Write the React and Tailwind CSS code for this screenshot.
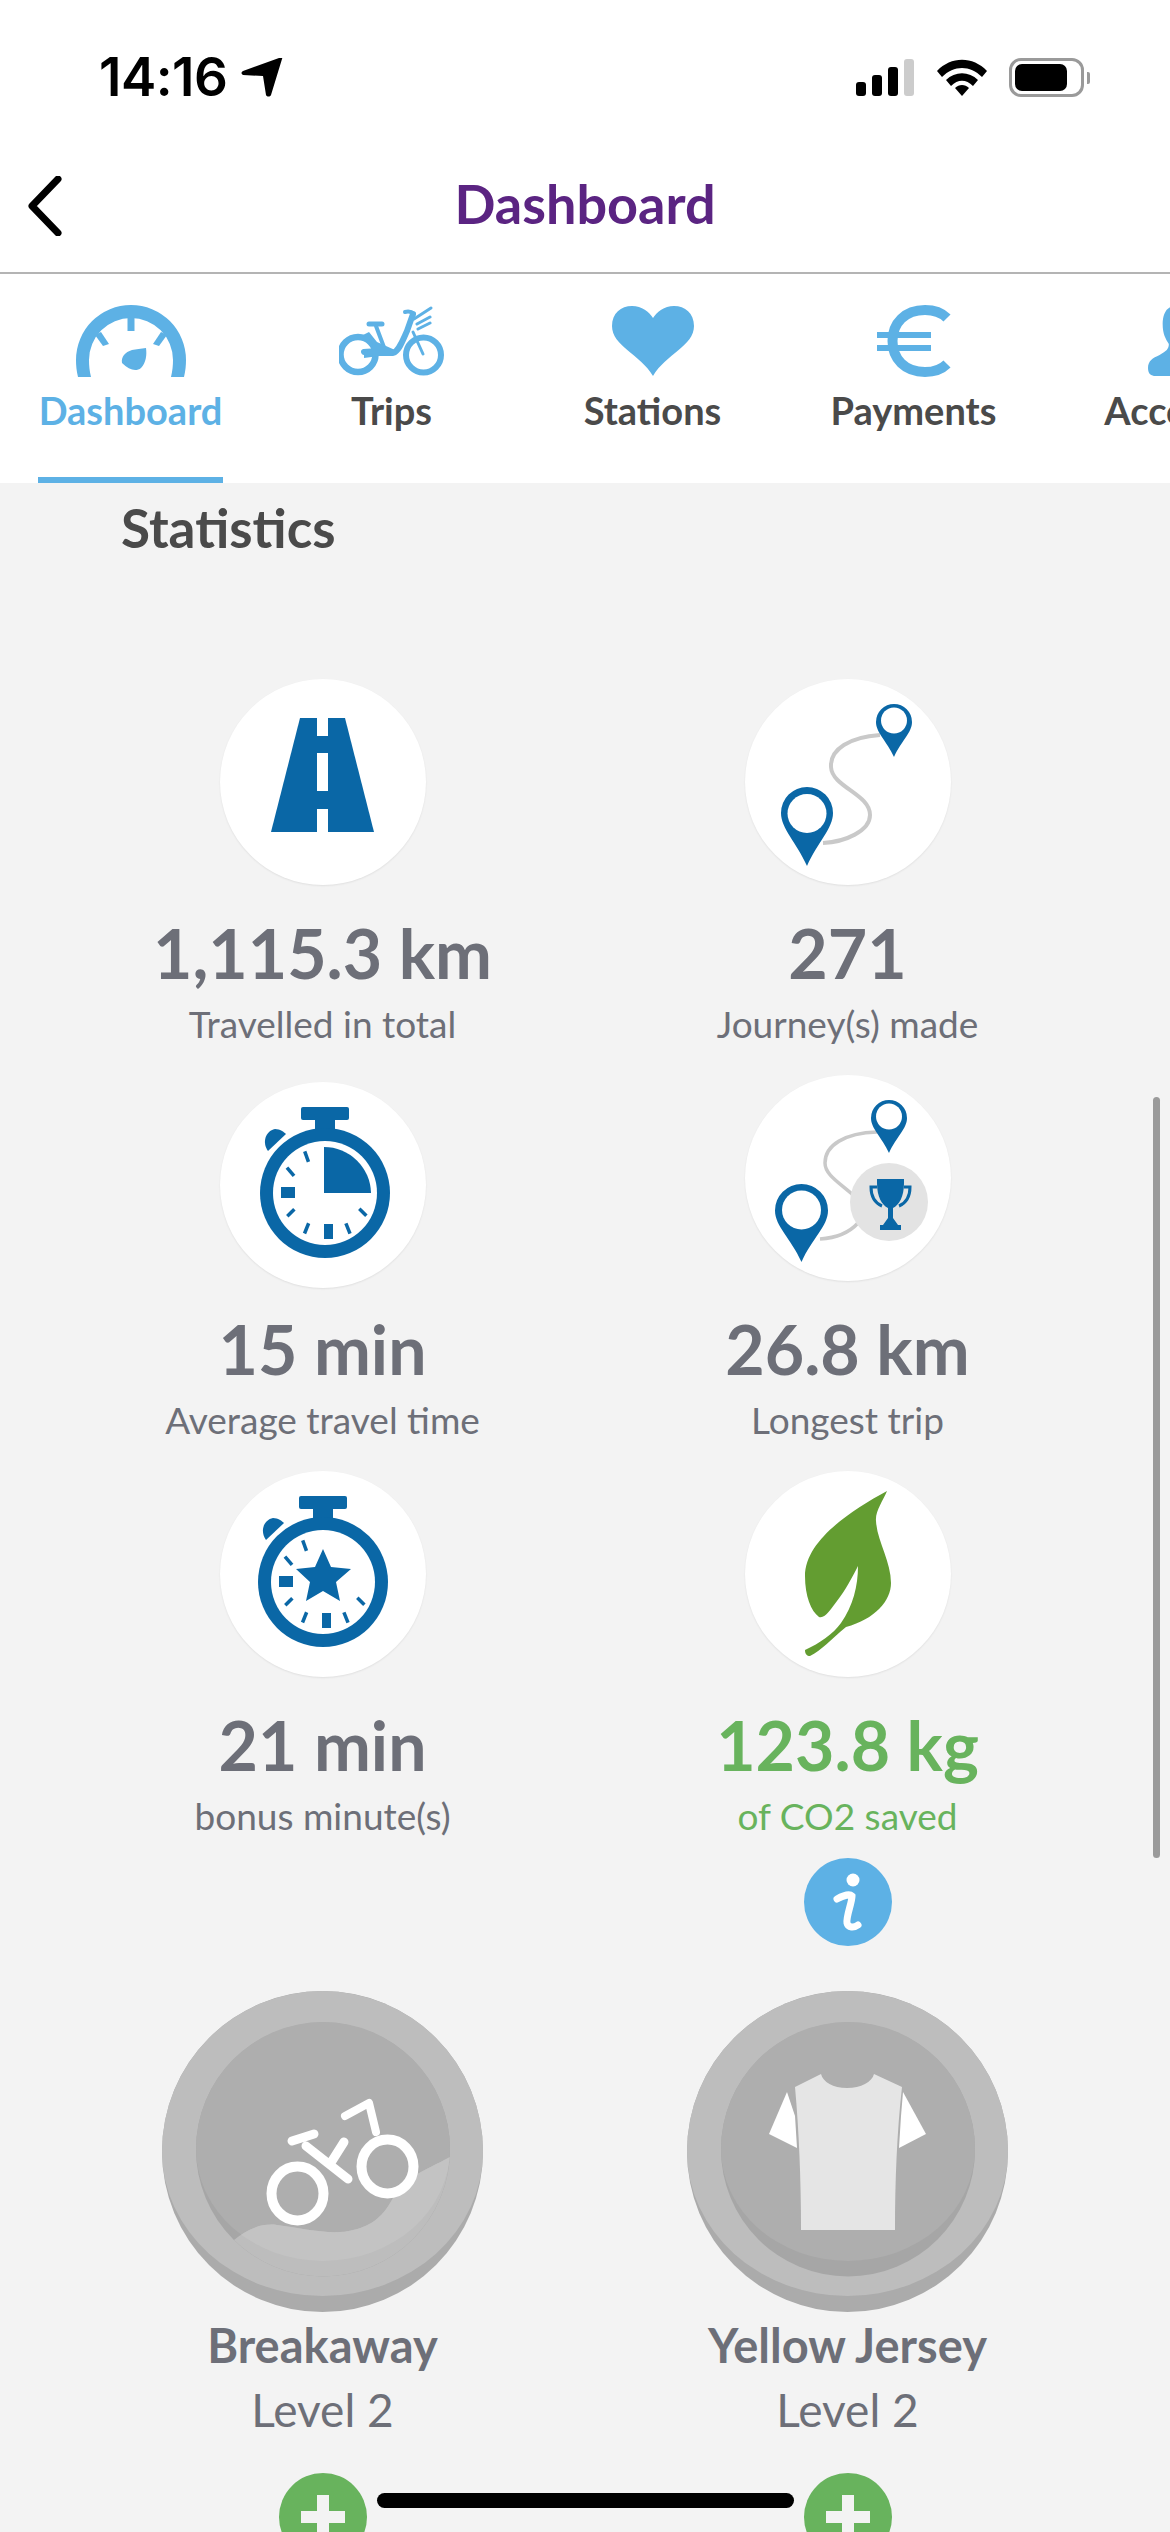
const BLUE = "#0a67a6";

function Pin({ x, top, w, h, holeR, holeCy }) {
  const r = w / 2;
  const cy = top + r;
  const tip = top + h;
  return (
    <g>
      <path
        d={`M${x} ${tip} C${x - r * 0.4} ${tip - r * 0.9} ${x - r} ${cy + r * 0.6} ${x - r} ${cy} A${r} ${r} 0 0 1 ${x + r} ${cy} C${x + r} ${cy + r * 0.6} ${x + r * 0.4} ${tip - r * 0.9} ${x} ${tip} Z`}
        fill={BLUE}
      />
      <circle cx={x} cy={holeCy} r={holeR} fill="#fff" />
    </g>
  );
}

function RoadIcon() {
  return (
    <svg width="206" height="206" viewBox="0 0 206 206" className="block">
      <polygon points="80,39 125,39 154,153 51,153" fill={BLUE} />
      <rect x="97" y="39" width="11" height="18" fill="#fff" />
      <rect x="97" y="74" width="11" height="38" fill="#fff" />
      <rect x="97" y="130" width="11" height="23" fill="#fff" />
    </svg>
  );
}

function JourneyIcon() {
  return (
    <svg width="206" height="206" viewBox="0 0 206 206" className="block">
      <path d="M135 56 C105 58 85 70 86 88 C87 108 125 115 125 136 C125 152 100 163 78 164" fill="none" stroke="#c9c9c9" strokeWidth="4" />
      <Pin x={149} top={25} w={36} h={53} holeR={13} holeCy={41.5} />
      <Pin x={62} top={108} w={52} h={79} holeR={19.5} holeCy={134.5} />
    </svg>
  );
}

function LongestIcon() {
  return (
    <svg width="206" height="206" viewBox="0 0 206 206" className="block">
      <path d="M132 57 C100 58 80 70 80 88 C80 100 95 108 108 120" fill="none" stroke="#c9c9c9" strokeWidth="3.5" />
      <path d="M113 148 C104 158 90 163 75 164" fill="none" stroke="#c9c9c9" strokeWidth="3.5" />
      <Pin x={144} top={25} w={36} h={53} holeR={13} holeCy={41.5} />
      <Pin x={56.5} top={109} w={53} h={78} holeR={19.5} holeCy={135} />
      <circle cx="144" cy="127" r="39" fill="#e3e3e3" />
      <path d="M132 104 H159 V108 C159 122 154 130 148 133 V143 L153 150 H156 V155 H135 V150 H138 L143 143 V133 C137 130 132 122 132 108 Z" fill={BLUE} />
      <path d="M132 112 H126 C126 122 130 128 137 131 M159 112 H165 C165 122 161 128 154 131" fill="none" stroke={BLUE} strokeWidth="3" />
    </svg>
  );
}

function Ticks({ dx = 0 }) {
  return (
    <g fill={BLUE} transform={`translate(${dx} 0)`}>
      <rect x="61" y="105" width="14" height="11" />
      <rect x="104" y="142" width="9" height="15" />
      <rect x="85" y="69" width="3.5" height="11" transform="rotate(-20 87 75)" />
      <rect x="69" y="84" width="3.5" height="11" transform="rotate(-40 71 90)" />
      <rect x="69" y="126" width="3.5" height="10" transform="rotate(45 71 131)" />
      <rect x="85" y="141" width="3.5" height="11" transform="rotate(22 87 146)" />
      <rect x="126" y="141" width="3.5" height="11" transform="rotate(-22 128 146)" />
      <rect x="141" y="125" width="3.5" height="10" transform="rotate(-45 143 130)" />
    </g>
  );
}

function WatchBody({ cx, cy, r, inner }) {
  return (
    <g>
      <rect x={cx - 24} y={cy - 86} width="48" height="13" rx="2" fill={BLUE} />
      <rect x={cx - 10} y={cy - 74} width="20" height="12" fill={BLUE} />
      <path d={`M${cx - 57} ${cy - 42} C${cx - 63} ${cy - 50} ${cx - 60} ${cy - 62} ${cx - 50} ${cy - 64} C${cx - 45} ${cy - 64} ${cx - 41} ${cy - 61} ${cx - 39} ${cy - 59} Z`} fill={BLUE} />
      <circle cx={cx} cy={cy} r={r} fill={BLUE} />
      <circle cx={cx} cy={cy} r={inner} fill="#fff" />
    </g>
  );
}

function TimeIcon() {
  return (
    <svg width="206" height="206" viewBox="0 0 206 206" className="block">
      <WatchBody cx={105} cy={111} r={65} inner={52} />
      <path d="M104 111 V65 A47 47 0 0 1 151 111 Z" fill={BLUE} />
      <Ticks />
    </svg>
  );
}

function BonusIcon() {
  return (
    <svg width="206" height="206" viewBox="0 0 206 206" className="block">
      <WatchBody cx={103} cy={111} r={65} inner={52} />
      <polygon points="103,78 111,96 131,98 116,111 120,130 103,120 86,130 90,111 76,98 95,96" fill={BLUE} />
      <Ticks dx={-2} />
    </svg>
  );
}

function LeafIcon() {
  return (
    <svg width="206" height="206" viewBox="0 0 206 206" className="block">
      <path
        d="M142 20 C105 40 60 70 60 105 C60 125 66 140 74 146 C80 148 86 138 92 130 C100 120 108 105 113 95 C113 115 108 135 96 152 C88 163 75 172 60 179 C60 183 62 185 65 185 C76 180 86 168 101 156 C130 148 146 130 146 112 C146 90 132 70 131 50 C130 40 138 30 142 20 Z"
        fill="#639d31"
      />
    </svg>
  );
}

function InfoIcon() {
  return (
    <svg width="88" height="88" viewBox="0 0 88 88" className="block">
      <circle cx="44" cy="44" r="44" fill="#5db1e5" />
      <circle cx="49" cy="22" r="6.5" fill="#fff" />
      <path d="M33 41 C40 37 46 36 48 38 C48 45 42 58 43 65 C44 70 50 70 54 67" fill="none" stroke="#fff" strokeWidth="7" strokeLinecap="round" />
    </svg>
  );
}

function BadgeBase({ children }) {
  return (
    <svg width="321" height="321" viewBox="0 0 321 321" className="block">
      <defs>
        <clipPath id="innerAll"><circle cx="161" cy="158.5" r="127" /></clipPath>
        <clipPath id="innerTop"><path d="M34 158 A127 127 0 0 1 288 158 A127 112 0 0 1 34 158 Z" /></clipPath>
      </defs>
      <circle cx="160.5" cy="160.5" r="160.5" fill="#ababab" />
      <path d="M0 160.5 A160.5 160.5 0 0 1 321 160.5 A160.5 144.5 0 0 1 0 160.5 Z" fill="#bdbdbd" />
      <circle cx="161" cy="158.5" r="127" fill="#a6a6a6" />
      <path d="M34 158 A127 127 0 0 1 288 158 A127 112 0 0 1 34 158 Z" fill="#aeaeae" />
      {children}
    </svg>
  );
}

function BreakawayBadge() {
  const hill = "M72 249 C85 238 100 232 115 234 C140 237 170 245 191 239 C210 235 222 225 232 205 C245 185 262 180 288 166 L300 300 L60 300 Z";
  return (
    <BadgeBase>
      <path d={hill} fill="#bdbdbd" clipPath="url(#innerAll)" />
      <path d={hill} fill="#c3c3c3" clipPath="url(#innerTop)" />
      <g fill="none" stroke="#fff" strokeLinecap="round" strokeLinejoin="round">
        <ellipse cx="135.5" cy="202.5" rx="26" ry="27" strokeWidth="10" />
        <ellipse cx="225.5" cy="175.5" rx="26" ry="27" strokeWidth="10" />
        <path d="M144 155 L186 188 M182 151 L170 170 M130 150 L152 143" strokeWidth="9" />
        <path d="M183 125 L207 112 L214 141" strokeWidth="8" />
      </g>
    </BadgeBase>
  );
}

function JerseyBadge() {
  return (
    <BadgeBase>
      <path d="M108 96 L134 83 C136 91 146 97 160 97 C174 97 185 91 187 83 L215 96 C210 140 208 190 208 239 L114 239 C114 190 112 140 108 96 Z" fill="#e5e5e5" />
      <polygon points="100,101 82,143 110,157 108,125" fill="#fff" />
      <polygon points="216,101 239,143 212,157 214,125" fill="#fff" />
    </BadgeBase>
  );
}

function PlusButton() {
  return (
    <svg width="88" height="88" viewBox="0 0 88 88" className="block">
      <circle cx="44" cy="44" r="44" fill="#68b35d" />
      <rect x="22" y="38" width="44" height="12" fill="#f3f3f3" />
      <rect x="38" y="22" width="12" height="44" fill="#f3f3f3" />
    </svg>
  );
}

function GaugeIcon() {
  return (
    <svg width="110" height="72" viewBox="0 0 110 72" className="block">
      <path d="M2 72 C0.5 66 0 60 0 55 A55 55 0 0 1 110 55 C110 60 109.5 66 108 72 H95 C96.5 66 97 60 97 55 A42 42 0 0 0 13 55 C13 60 13.5 66 15 72 Z" fill="#5db1e5" />
      <rect x="51.5" y="11" width="7" height="15" fill="#5db1e5" />
      <path d="M19 30 L25 27 L33 39 L27 41 Z" fill="#5db1e5" />
      <path d="M91 30 L85 27 L77 39 L83 41 Z" fill="#5db1e5" />
      <path d="M70 43 C71 50 70 58 65 63 C60 67 53 65 46 58 C45 52 49 47 56 45 C60 44 65 44 70 43 Z" fill="#5db1e5" />
    </svg>
  );
}

function BikeIcon() {
  return (
    <svg width="105" height="70" viewBox="0 0 105 70" className="block">
      <g fill="none" stroke="#5db1e5" strokeLinecap="round" strokeLinejoin="round">
        <circle cx="19" cy="48.5" r="17.5" strokeWidth="6.5" />
        <circle cx="84.5" cy="49" r="17.5" strokeWidth="6" />
        <path d="M30 18 H43" strokeWidth="5" />
        <path d="M37 20 L46 44" strokeWidth="4" />
        <path d="M25 46 C35 44 45 47 54 47 C60 45 63 36 68 25 L74 8" strokeWidth="6" />
        <path d="M66 6 C70 5 73 6 75 8" strokeWidth="4" />
        <path d="M75 13 L92 2 M78 18 L91 11 M79 23 L91 17" strokeWidth="3" />
        <path d="M74 26 L84 48" strokeWidth="3" />
      </g>
      <path d="M22 30 C30 30 34 36 34 42 L25 47 L25 52 L40 50 L52 50 L56 44 L38 36 L30 26 Z" fill="#5db1e5" />
    </svg>
  );
}

function HeartIcon() {
  return (
    <svg width="82" height="70" viewBox="0 0 82 70" className="block">
      <path d="M41 70 C28 48 0 40 0 20 C0 7 9 0 20 0 C30 0 37 6 41 12 C45 6 52 0 62 0 C73 0 82 7 82 20 C82 40 54 48 41 70 Z" fill="#5db1e5" />
    </svg>
  );
}

function EuroIcon() {
  return (
    <svg width="74" height="72" viewBox="0 0 74 72" className="block">
      <path d="M70 13 C64 7 56 5 48 5 C28 5 15.5 18 15.5 36 C15.5 54 28 67 48 67 C56 67 64 65 70 59" fill="none" stroke="#5db1e5" strokeWidth="10" />
      <rect x="0" y="27" width="54" height="6" fill="#5db1e5" />
      <rect x="0" y="40" width="54" height="6" fill="#5db1e5" />
    </svg>
  );
}

function PersonIcon() {
  return (
    <svg width="54" height="70" viewBox="0 0 70 70" preserveAspectRatio="none" className="block">
      <path d="M35 0 C24 0 19 8 19 18 C19 28 23 33 27 38 C27 43 24 45 15 49 C6 52 0 55 0 62 C0 68 4 70 10 70 H60 C66 70 70 68 70 62 C70 55 64 52 55 49 C46 45 43 43 43 38 C47 33 51 28 51 18 C51 8 46 0 35 0 Z" fill="#5db1e5" />
    </svg>
  );
}

function StatusIcons() {
  return (
    <div className="flex items-center">
      <div className="flex items-end gap-[6px] h-[37px]">
        <div className="w-[10px] h-[14px] rounded-[3px] bg-black" />
        <div className="w-[10px] h-[21px] rounded-[3px] bg-black" />
        <div className="w-[10px] h-[29px] rounded-[3px] bg-black" />
        <div className="w-[10px] h-[37px] rounded-[3px] bg-[#cccccc]" />
      </div>
      <svg width="50" height="37" viewBox="0 0 50 37" className="block ml-[23px]">
        <path d="M0 12 C14 -3 36 -3 50 12 L45 18 C33 6 17 6 5 18 Z" fill="#000" />
        <path d="M9 21 C18 12 32 12 41 21 L36 27 C29 20 21 20 14 27 Z" fill="#000" />
        <path d="M18 29 C22 25 28 25 32 29 L25 37 Z" fill="#000" />
      </svg>
      <div className="ml-[22px] w-[75px] h-[39px] rounded-[12px] border-[3px] border-[#9a9a9a] p-[3px] pr-[14px]">
        <div className="w-full h-full rounded-[7px] bg-black" />
      </div>
      <div className="ml-[3px] w-[3px] h-[12px] rounded-r-[2px] bg-[#9a9a9a]" />
    </div>
  );
}

const tabs = [
  { label: "Dashboard", icon: <GaugeIcon />, active: true },
  { label: "Trips", icon: <BikeIcon /> },
  { label: "Stations", icon: <HeartIcon /> },
  { label: "Payments", icon: <EuroIcon /> },
  { label: "Account", icon: <PersonIcon /> },
];

const stats = [
  { value: "1,115.3 km", label: "Travelled in total", icon: <RoadIcon /> },
  { value: "271", label: "Journey(s) made", icon: <JourneyIcon /> },
  { value: "15 min", label: "Average travel time", icon: <TimeIcon />, nudge: true },
  { value: "26.8 km", label: "Longest trip", icon: <LongestIcon /> },
  { value: "21 min", label: "bonus minute(s)", icon: <BonusIcon /> },
  { value: "123.8 kg", label: "of CO2 saved", icon: <LeafIcon />, green: true, info: true },
];

const badges = [
  { name: "Breakaway", level: "Level 2", icon: <BreakawayBadge /> },
  { name: "Yellow Jersey", level: "Level 2", icon: <JerseyBadge /> },
];

export default function App() {
  return (
    <div className="relative h-[2532px] w-[1170px] overflow-hidden bg-[#f3f3f3] font-['Lato','Noto_Sans',sans-serif]">
      <header className="bg-white h-[274px] border-b-2 border-[#b4b4b4] flex flex-col">
        <div className="h-[117px] pt-[58px] pl-[99px] pr-[80px] flex items-start justify-between">
          <div className="flex items-center h-[39px]">
            <span className="font-['Inter',sans-serif] text-[53px] leading-[39px] font-semibold tracking-[-0.5px] text-black">14:16</span>
            <svg width="42" height="39" viewBox="0 0 42 39" className="block ml-[14px]">
              <path d="M41 1 L30 37 C29 39 26 39 25 37 L22 18 L2 17 C0 16 0 14 2 13 L38 0 C40 -1 42 0 41 1 Z" fill="#000" />
            </svg>
          </div>
          <StatusIcons />
        </div>
        <div className="relative flex-1 flex items-center justify-center pt-[19px]">
          <svg width="36" height="60" viewBox="0 0 36 60" className="absolute left-[27px] top-[59px]">
            <path d="M31 3 L5 30 L31 57" fill="none" stroke="#000" strokeWidth="7" strokeLinecap="round" strokeLinejoin="round" />
          </svg>
          <h1 className="text-[54px] leading-[60px] font-bold text-[#5b2482]">Dashboard</h1>
        </div>
      </header>

      <nav className="h-[209px] bg-white flex overflow-hidden">
        {tabs.map((t) => (
          <div key={t.label} className="w-[261px] shrink-0 h-full flex flex-col items-center">
            <div className="h-[72px] mt-[31px] flex items-center justify-center">{t.icon}</div>
            <div className={`mt-[8px] text-[38px] leading-[50px] font-bold whitespace-nowrap ${t.active ? "text-[#5db1e5]" : "text-[#4a4a4a]"}`}>
              {t.label}
            </div>
            <div className="flex-1" />
            <div className={`w-[185px] h-[6px] ${t.active ? "bg-[#5db1e5]" : "bg-transparent"}`} />
          </div>
        ))}
      </nav>

      <main>
        <h2 className="pl-[121px] pt-[15px] text-[53px] leading-[60px] font-bold text-[#4a4a4a]">Statistics</h2>
        <div className="grid grid-cols-2 px-[60px] mt-[121px] gap-y-[9px]">
          {stats.map((s) => (
            <div key={s.label} className="flex flex-col items-center min-h-[387px]">
              <div className={`w-[206px] h-[206px] rounded-full bg-white shadow-[0_1px_2px_rgba(0,0,0,0.08)] ${s.nudge ? "mt-[7px] -mb-[7px]" : ""}`}>
                {s.icon}
              </div>
              <div className={`mt-[28px] text-[68px] leading-[80px] font-bold whitespace-nowrap ${s.green ? "text-[#68b35d]" : "text-[#6d6f78]"}`}>
                {s.value}
              </div>
              <div className={`mt-[6px] text-[37px] leading-[50px] whitespace-nowrap ${s.green ? "text-[#68b35d]" : "text-[#6d6f78]"}`}>
                {s.label}
              </div>
              {s.info && <div className="mt-[17px]"><InfoIcon /></div>}
            </div>
          ))}
        </div>
        <div className="grid grid-cols-2 px-[60px] mt-[45px]">
          {badges.map((b) => (
            <div key={b.name} className="flex flex-col items-center">
              <div className="w-[321px] h-[321px]">{b.icon}</div>
              <div className="mt-[5px] text-[47px] leading-[56px] font-bold whitespace-nowrap text-[#6d6f78]">{b.name}</div>
              <div className="mt-[9px] text-[46px] leading-[56px] whitespace-nowrap text-[#6d6f78]">{b.level}</div>
              <div className="mt-[35px]"><PlusButton /></div>
            </div>
          ))}
        </div>
      </main>

      <div className="absolute left-[1153px] top-[1097px] w-[7px] h-[761px] rounded-full bg-[#9a9a9a]" />
      <div className="absolute left-[377px] top-[2493px] w-[417px] h-[15px] rounded-full bg-black" />
    </div>
  );
}
